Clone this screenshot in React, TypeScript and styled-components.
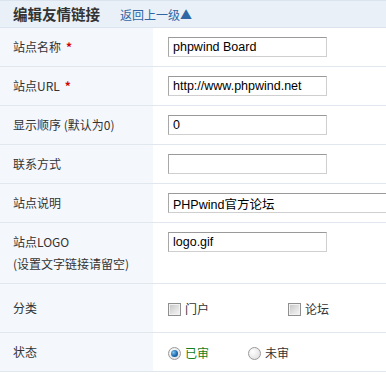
import styled, { createGlobalStyle } from "styled-components";

const GlobalStyle = createGlobalStyle`
  html, body {
    margin: 0;
    padding: 0;
    background: #ffffff;
  }
  body {
    font-family: "Noto Sans CJK SC", "Liberation Sans", sans-serif;
    font-size: 12px;
    color: #333333;
  }
`;

const Panel = styled.div`
  width: 386px;
  overflow: hidden;
`;

const Header = styled.div`
  display: flex;
  align-items: center;
  height: 28px;
  box-sizing: border-box;
  padding-left: 13px;
  background: #e9f0f8;
  border-top: 1px solid #dbe4ee;
  border-bottom: 1px solid #dbe4ee;
`;

const Title = styled.h2`
  margin: 0;
  font-size: 14.5px;
  font-weight: bold;
  color: #333333;
  line-height: 1;
`;

const BackLink = styled.a`
  margin-left: 20px;
  font-size: 12px;
  color: #2f66a3;
  text-decoration: none;
`;

const Row = styled.div<{ $height: number }>`
  display: flex;
  height: ${(p) => p.$height}px;
  box-sizing: border-box;
  border-bottom: 1px solid #e1e7ef;
`;

const Label = styled.div<{ $top?: boolean }>`
  flex: 0 0 153px;
  display: flex;
  flex-direction: column;
  justify-content: ${(p) => (p.$top ? "flex-start" : "center")};
  padding: ${(p) => (p.$top ? "8px 0 0 13px" : "0 0 0 13px")};
  box-sizing: border-box;
  background: #f4f7fc;
  line-height: 22px;
  color: #333333;
`;

const Required = styled.span`
  color: #d40000;
  margin-left: 5px;
  font-weight: bold;
`;

const Field = styled.div<{ $top?: boolean }>`
  flex: 1;
  display: flex;
  align-items: ${(p) => (p.$top ? "flex-start" : "center")};
  padding: ${(p) => (p.$top ? "9px 0 0 15px" : "0 0 0 15px")};
`;

const TextInput = styled.input<{ $wide?: boolean }>`
  width: ${(p) => (p.$wide ? 300 : 159)}px;
  flex-shrink: 0;
  height: 20px;
  box-sizing: border-box;
  padding: 0 4px;
  border: 1px solid #cfcfcf;
  border-top-color: #9a9a9a;
  border-left-color: #a8a8a8;
  font-family: "Liberation Sans", Arial, "Noto Sans CJK SC", sans-serif;
  font-size: 12.5px;
  color: #000000;
  outline: none;
  background: #ffffff;
`;

const Option = styled.label<{ $width: number; $checked?: boolean }>`
  display: flex;
  align-items: center;
  width: ${(p) => p.$width}px;
  color: ${(p) => (p.$checked ? "#18801a" : "#333333")};
`;

const Checkbox = styled.span`
  width: 11px;
  height: 11px;
  margin-right: 4px;
  margin-top: 3px;
  border: 1px solid #8f8f8f;
  background: linear-gradient(135deg, #c4c4c4 0%, #e4e4e4 60%, #f6f6f6 100%);
  box-shadow: inset 0 0 0 1px #f2f2f2;
`;

const Radio = styled.span<{ $checked?: boolean }>`
  position: relative;
  width: 11px;
  height: 11px;
  margin-right: 4px;
  margin-top: 3px;
  border-radius: 50%;
  border: 1px solid #9a9a9a;
  background: radial-gradient(circle at 35% 35%, #ffffff 0%, #d9d9d9 100%);

  &::after {
    content: "";
    display: ${(p) => (p.$checked ? "block" : "none")};
    position: absolute;
    left: 2px;
    top: 2px;
    width: 7px;
    height: 7px;
    border-radius: 50%;
    background: radial-gradient(circle at 35% 35%, #7fc2ef 0%, #1e6cb0 55%, #0b3f73 100%);
  }
`;

const rows = [
  { label: "站点名称", required: true, value: "phpwind Board" },
  { label: "站点URL", required: true, value: "http://www.phpwind.net" },
  { label: "显示顺序 (默认为0)", value: "0" },
  { label: "联系方式", value: "" },
  { label: "站点说明", value: "PHPwind官方论坛", wide: true },
];

const App = () => {
  return (
    <Panel>
      <GlobalStyle />
      <Header>
        <Title>编辑友情链接</Title>
        <BackLink href="#">返回上一级▲</BackLink>
      </Header>
      {rows.map((row) => (
        <Row $height={39} key={row.label}>
          <Label>
            <span>
              {row.label}
              {row.required && <Required>*</Required>}
            </span>
          </Label>
          <Field>
            <TextInput defaultValue={row.value} $wide={row.wide} />
          </Field>
        </Row>
      ))}
      <Row $height={61}>
        <Label $top>
          <span>站点LOGO</span>
          <span>(设置文字链接请留空)</span>
        </Label>
        <Field $top>
          <TextInput defaultValue="logo.gif" />
        </Field>
      </Row>
      <Row $height={49}>
        <Label>分类</Label>
        <Field>
          <Option $width={120}>
            <Checkbox />
            门户
          </Option>
          <Option $width={120}>
            <Checkbox />
            论坛
          </Option>
        </Field>
      </Row>
      <Row $height={39}>
        <Label>状态</Label>
        <Field>
          <Option $width={80} $checked>
            <Radio $checked />
            已审
          </Option>
          <Option $width={80}>
            <Radio />
            未审
          </Option>
        </Field>
      </Row>
    </Panel>
  );
};

export default App;
